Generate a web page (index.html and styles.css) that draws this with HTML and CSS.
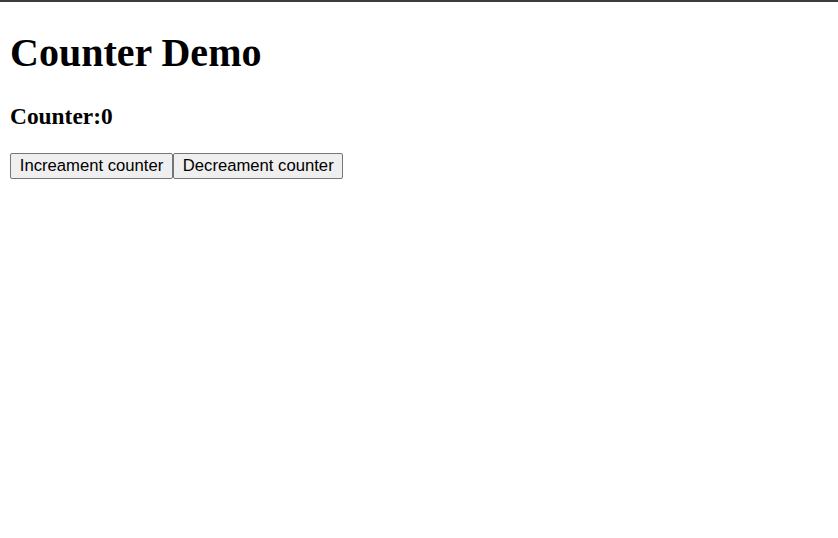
FILE: index.html
```html
<!DOCTYPE html>
<html lang="en">
<head>
<meta charset="utf-8">
<title>Counter Demo</title>
<link rel="stylesheet" href="styles.css">
</head>
<body>
<h1 class="title">Counter Demo</h1>
<h3 class="count">Counter:0</h3>
<div class="actions"><button class="btn">Increament counter</button><button class="btn">Decreament counter</button></div>
</body>
</html>
```

FILE: styles.css
```css
html {
  border-top: 2px solid #3c3c3c;
  font-size: 20px;
}
body {
  margin: 10px;
  font-family: "Liberation Serif", "Times New Roman", serif;
  color: #000;
  background: #fff;
}
.title {
  font-size: 40px;
  font-weight: bold;
  margin: 16.8px 0 26.8px;
}
.count {
  font-size: 23.4px;
  font-weight: bold;
  margin: 23.4px 0;
}
.actions {
  display: flex;
}
.btn {
  font-family: "Liberation Sans", Arial, sans-serif;
  font-size: 16.67px;
  padding: 2.5px 8.75px 2px;
  border: 1px solid #767676;
  border-radius: 2px;
  background: #efefef;
  color: #000;
}
```
